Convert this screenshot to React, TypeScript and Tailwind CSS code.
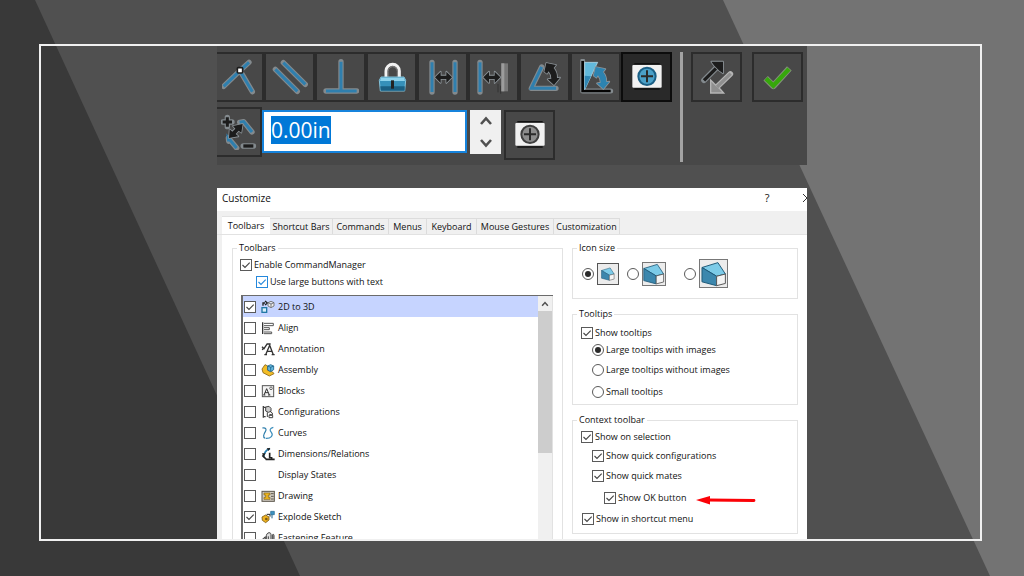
import { useEffect, useRef } from 'react';
import type { ReactNode } from 'react';
import { clsx } from 'clsx';

const BLUE = '#2f7fae';
const DARK = '#1c1c1c';

/* ── toolbar icons ─────────────────────────────────── */

function ToolIcon({ children }: { children: ReactNode }) {
  return (
    <svg viewBox="0 0 108 108" className="h-9 w-9 shrink-0" fill="none" aria-hidden="true">
      {children}
    </svg>
  );
}

// a stroke with the pale halo that every toolbar glyph has
function Line({ d, color = BLUE, width = 9 }: { d: string; color?: string; width?: number }) {
  return (
    <>
      <path d={d} stroke="#838a8e" strokeWidth={width + 7} strokeLinejoin="round" strokeLinecap="round" />
      <path d={d} stroke={color} strokeWidth={width} />
    </>
  );
}

function Shape({ d, color = DARK }: { d: string; color?: string }) {
  return <path d={d} fill={color} stroke="#8d9499" strokeWidth="5" strokeLinejoin="round" paintOrder="stroke" />;
}

function CoincidentIcon() {
  return (
    <ToolIcon>
      <Line d="M5 82 L54 35 L81 10 M54 35 L91 98" />
      <rect x="46" y="26" width="16" height="16" rx="3" fill="#fff" stroke={DARK} strokeWidth="5" />
    </ToolIcon>
  );
}

function ParallelIcon() {
  return (
    <ToolIcon>
      <Line d="M10 31 L76 97 M34 11 L100 76" />
    </ToolIcon>
  );
}

function PerpendicularIcon() {
  return (
    <ToolIcon>
      <Line d="M54 8 V95 M9 96 H101" />
    </ToolIcon>
  );
}

function LockIcon() {
  return (
    <ToolIcon>
      <path d="M36 58 V36 a20 20 0 0 1 40 0 V58" stroke="#f2f2f2" strokeWidth="9" />
      <path d="M42 56 V37 a14 14 0 0 1 28 0 V56" stroke="#8a8a8a" strokeWidth="3" />
      <path d="M21 54 H90 L95 64 L92 96 H19 L16 64 Z" fill="#3690b9" stroke="#86c3da" strokeWidth="3" />
      <path d="M21 56 H90 L93 66 H18 Z" fill="#8ed3ec" />
      <path d="M19 82 H92 V95 H20 Z" fill="#1b5f82" />
      <rect x="51" y="64" width="9" height="25" fill="#222" />
    </ToolIcon>
  );
}

const DOUBLE_ARROW = 'M30 55 L47 38 V50 H64 V38 L81 55 L64 72 V60 H47 V72 Z';

function DistanceIcon() {
  return (
    <ToolIcon>
      <Line d="M21 10 V99 M90 10 V99" />
      <Shape d={DOUBLE_ARROW} />
    </ToolIcon>
  );
}

function DistanceLimitIcon() {
  return (
    <ToolIcon>
      <Line d="M12 10 V99" />
      <path d="M66 75 V100 M74 80 V104" stroke="#333" strokeWidth="3" />
      <rect x="76" y="13" width="20" height="84" fill="#777" />
      <rect x="76" y="13" width="9" height="84" fill="#9c9c9c" />
      <g transform="translate(-8 0)">
        <Shape d={DOUBLE_ARROW} />
      </g>
    </ToolIcon>
  );
}

const CURVED_ARROW = 'M52 38 L58 12 L87 18 L80 27 Q91 40 90 57 L99 56 L81 78 L62 61 L73 59 Q73 47 65 37 L60 44 Z';

function AngleIcon() {
  return (
    <ToolIcon>
      <Line d="M44 24 L13 88 H87" />
      <Shape d={CURVED_ARROW} />
    </ToolIcon>
  );
}

function AngleLimitIcon() {
  return (
    <ToolIcon>
      <Line d="M14 6 V96 H98" color="#050505" width={8} />
      <path d="M20 10 H59 L20 92 Z" fill="#62b9dc" stroke="#c4e4f0" strokeWidth="2" />
      <path d="M20 50 L39 52 L20 92 Z" fill="#2f86b3" />
      <g transform="translate(-5 12)">
        <Shape d={CURVED_ARROW} color="#2d83b0" />
      </g>
    </ToolIcon>
  );
}

function TargetIcon({ muted = false }: { muted?: boolean }) {
  return (
    <ToolIcon>
      <path d="M16 14 H92 M16 90 H92" stroke="#111" strokeWidth="4" />
      <rect x="10" y="18" width="88" height="68" rx="3" fill="#f1f1f1" />
      <circle cx="54" cy="52" r="26" fill={muted ? '#8d8d8d' : '#4ba0c8'} stroke={muted ? '#3f3f3f' : '#1b5f85'} strokeWidth="6" />
      <path d="M54 34 V70 M36 52 H72" stroke="#2a2a2a" strokeWidth="6" />
    </ToolIcon>
  );
}

function FlipIcon() {
  return (
    <ToolIcon>
      <Line d="M15 64 L54 25" color={DARK} width={10} />
      <Shape d="M37 8 H72 V43 L61 35 L46 20 Z" />
      <path d="M94 45 L56 82" stroke="#b5b5b5" strokeWidth="17" strokeLinecap="round" />
      <path d="M35 63 V102 H74 L64 91 L46 74 Z" fill="#8f8f8f" stroke="#b5b5b5" strokeWidth="4" />
      <path d="M95 44 L54 84" stroke="#8f8f8f" strokeWidth="10" />
    </ToolIcon>
  );
}

function CheckMarkIcon() {
  return (
    <ToolIcon>
      <path d="M17 58 L40 81 L88 28" stroke="#829079" strokeWidth="19" strokeLinejoin="round" />
      <path d="M18 59 L40 80 L87 30" stroke="#36a80b" strokeWidth="13" />
    </ToolIcon>
  );
}

function DimensionIcon() {
  return (
    <ToolIcon>
      <Line d="M56 25 L68 23 L93 54" />
      <Line d="M23 82 L22 72 L47 102" />
      <Shape d="M24 72 L26 46 L34 53 L43 44 L36 36 L65 30 L61 56 L53 50 L44 60 L52 67 Z" />
      <Line d="M19 10 V38 M5 24 H33" color={DARK} width={9} />
      <Line d="M67 96 H97" color={DARK} width={10} />
    </ToolIcon>
  );
}

/* ── dialog icons ──────────────────────────────────── */

function RowIcon({ children }: { children?: ReactNode }) {
  return (
    <svg viewBox="0 0 42 42" className="h-3.5 w-3.5 shrink-0" fill="none" aria-hidden="true">
      {children}
    </svg>
  );
}

const toolbarRows: { name: string; checked?: boolean; selected?: boolean; icon?: ReactNode }[] = [
  {
    name: '2D to 3D',
    checked: true,
    selected: true,
    icon: (
      <>
        <rect x="3" y="23" width="14" height="14" fill="#d9effa" stroke="#2278a6" strokeWidth="4" />
        <path d="M6 17 V9 H12 M12 3 L19 9 L12 15" stroke="#222" strokeWidth="4" />
        <path d="M21 8 L30 4 L39 8 V18 L30 23 L21 18 Z M21 8 L30 12 L39 8 M30 12 V22" fill="#eee" stroke="#666" strokeWidth="2.5" />
      </>
    ),
  },
  {
    name: 'Align',
    icon: (
      <>
        <path d="M5 4 V39" stroke="#333" strokeWidth="4" />
        <path d="M9 7 H37 V14 H9 M9 20 H25 V26 H9 M9 33 H32 V38 H9" stroke="#555" strokeWidth="3" />
      </>
    ),
  },
  {
    name: 'Annotation',
    icon: (
      <>
        <path d="M14 38 L26 10 L37 38 M18 28 H33 M10 38 H18 M32 38 H41" stroke="#333" strokeWidth="4" />
        <path d="M3 14 L9 20 L19 5 M4 24 L8 16 M17 6 H29" stroke="#333" strokeWidth="4" />
      </>
    ),
  },
  {
    name: 'Assembly',
    icon: (
      <>
        <path d="M3 18 L12 5 L20 9 V22 L35 27 L39 32 L25 39 L6 29 Z" fill="#f2bd27" stroke="#8a6414" strokeWidth="2.5" />
        <path d="M20 9 L29 5 L38 9 V20 L29 26 L20 21 Z" fill="#65b8dd" stroke="#1f638a" strokeWidth="2.5" />
        <path d="M20 9 L29 13 L38 9 M29 13 V25" stroke="#1f638a" strokeWidth="2.5" />
      </>
    ),
  },
  {
    name: 'Blocks',
    icon: (
      <>
        <rect x="4" y="5" width="34" height="33" fill="#f3f3f3" stroke="#555" strokeWidth="3" />
        <path d="M9 33 L17 14 L25 33 M12 26 H22 M7 33 H13 M21 33 H28" stroke="#333" strokeWidth="3" />
        <circle cx="30" cy="13" r="4" stroke="#555" strokeWidth="2.5" />
      </>
    ),
  },
  {
    name: 'Configurations',
    icon: (
      <>
        <path d="M7 3 V38 M7 7 H15 M7 35 H14" stroke="#444" strokeWidth="4" />
        <path d="M14 6 L24 4 L30 10 V19 L22 22 L14 18 Z" fill="#ccc" stroke="#444" strokeWidth="3" />
        <path d="M19 22 V36 M28 20 L34 24 V30 L25 28 M24 31 H35 V38 H24 Z" stroke="#444" strokeWidth="3" />
      </>
    ),
  },
  {
    name: 'Curves',
    icon: (
      <>
        <path d="M4 6 C14 4 18 9 13 17 C8 25 5 33 12 37" stroke="#2d7dab" strokeWidth="3.5" />
        <path d="M37 4 C26 7 25 12 31 19 C38 28 30 38 14 37" stroke="#3b8ebc" strokeWidth="3.5" />
      </>
    ),
  },
  {
    name: 'Dimensions/Relations',
    icon: (
      <>
        <path d="M27 5 C13 9 9 18 8 31" stroke="#2a7fae" strokeWidth="5" />
        <path d="M17 4 L28 3 L23 12 Z M3 19 H14 L8 29 Z" fill="#222" />
        <path d="M4 25 L15 36 M26 17 V34 M14 37 H41 M26 28 L34 34" stroke="#222" strokeWidth="5" />
      </>
    ),
  },
  { name: 'Display States' },
  {
    name: 'Drawing',
    icon: (
      <>
        <rect x="3" y="7" width="37" height="30" fill="#cfcac0" stroke="#5c574c" strokeWidth="3" />
        <path d="M9 12 H27 V18 H22 V25 H27 V31 H9 V25 H14 V18 H9 Z" fill="#f0b71e" stroke="#806018" strokeWidth="2" />
        <path d="M30 14 H38 M30 22 H38 M30 30 H38" stroke="#5c574c" strokeWidth="3" />
      </>
    ),
  },
  {
    name: 'Explode Sketch',
    checked: true,
    icon: (
      <>
        <path d="M3 21 L14 15 L24 21 V30 L14 38 L4 31 Z" fill="#efb21f" stroke="#7a5a14" strokeWidth="2.5" />
        <circle cx="16" cy="27" r="4" fill="#7a5a14" />
        <path d="M17 13 H27 V20" stroke="#222" strokeWidth="3" />
        <path d="M29 4 H40 V14 H29 Z" fill="#3c93c2" stroke="#1f638a" strokeWidth="2" />
        <path d="M33 14 V25" stroke="#1f638a" strokeWidth="3" />
      </>
    ),
  },
  {
    name: 'Fastening Feature',
    icon: (
      <>
        <path d="M3 36 V26 L13 17 V36 Z" fill="#999" stroke="#444" strokeWidth="3" />
        <path d="M16 38 V14 C17 4 29 2 30 10 V38 Z" fill="#ddd" stroke="#444" strokeWidth="3" />
        <path d="M22 34 V16 M34 38 V12 C36 8 39 10 39 14 V38 Z" fill="#aaa" stroke="#444" strokeWidth="3" />
      </>
    ),
  },
];

function CubeIcon({ className }: { className: string }) {
  return (
    <svg viewBox="0 0 80 80" className={className} fill="none" aria-hidden="true">
      <path d="M3 20 L52 5 L75 40 L48 47 Z" fill="#7ccbe8" stroke="#1d5877" strokeWidth="3" />
      <path d="M3 20 L48 47 V76 L3 64 Z" fill="#3c87ad" stroke="#1d5877" strokeWidth="3" />
      <path d="M48 47 L75 40 V69 L48 76 Z" fill="#f4f4f4" stroke="#555" strokeWidth="3" />
    </svg>
  );
}

/* ── form controls ─────────────────────────────────── */

function Checkbox({ id, checked = false, accent = false }: { id: string; checked?: boolean; accent?: boolean }) {
  return (
    <span className="relative h-3 w-3 shrink-0">
      <input
        id={id}
        type="checkbox"
        defaultChecked={checked}
        className={clsx(
          'peer block h-3 w-3 appearance-none border bg-white',
          accent ? 'border-[#2488dc]' : 'border-[#5a5a5a]',
        )}
      />
      <svg
        viewBox="0 0 12 12"
        className={clsx(
          'pointer-events-none absolute inset-0 hidden peer-checked:block',
          accent ? 'text-[#2488dc]' : 'text-[#444]',
        )}
        fill="none"
        aria-hidden="true"
      >
        <path d="M2.5 6 L5 8.5 L9.7 3.6" stroke="currentColor" strokeWidth="1.1" />
      </svg>
    </span>
  );
}

function Radio({ id, name, checked = false }: { id: string; name: string; checked?: boolean }) {
  return (
    <input
      id={id}
      type="radio"
      name={name}
      defaultChecked={checked}
      aria-label={name === 'icon-size' ? id : undefined}
      className="h-3 w-3 shrink-0 appearance-none rounded-full border border-[#5a5a5a] bg-white bg-clip-content p-0.5 checked:bg-[#2b2b2b]"
    />
  );
}

function Option({ className, control, id, children }: { className: string; control: ReactNode; id: string; children: ReactNode }) {
  return (
    <div className={clsx('flex items-center gap-0.5', className)}>
      {control}
      <label htmlFor={id} className="whitespace-nowrap">
        {children}
      </label>
    </div>
  );
}

function Group({ title, className, children }: { title: string; className?: string; children: ReactNode }) {
  return (
    <fieldset className={clsx('min-w-0 border border-[#e2e2e2]', className)}>
      <legend className="ml-1 px-0.5 leading-[14px]">{title}</legend>
      {children}
    </fieldset>
  );
}

function ToolButton({
  label,
  className = 'w-[51px]',
  active = false,
  children,
}: {
  label: string;
  className?: string;
  active?: boolean;
  children: ReactNode;
}) {
  return (
    <button
      type="button"
      aria-label={label}
      aria-pressed={active}
      className={clsx(
        'flex h-[50px] shrink-0 items-center justify-center border-2',
        active ? 'border-[#0c0c0c] bg-[#292929]' : 'border-[#2c2c2c]',
        className,
      )}
    >
      {children}
    </button>
  );
}

function Chevron({ down = false, className }: { down?: boolean; className: string }) {
  return (
    <svg viewBox="0 0 14 10" className={className} fill="none" aria-hidden="true">
      <path d={down ? 'M2 2 L7 7.5 L12 2' : 'M2 8 L7 2.5 L12 8'} stroke="#505050" strokeWidth="2.6" />
    </svg>
  );
}

/* ── panels ────────────────────────────────────────── */

function MateToolbar() {
  const valueRef = useRef<HTMLInputElement>(null);

  useEffect(() => {
    valueRef.current?.focus();
    valueRef.current?.select();
  }, []);

  return (
    <section aria-label="Mate toolbar" className="flex h-[119px] shrink-0 overflow-hidden bg-[#484848] pt-1.5">
      <div className="flex flex-col gap-[5px]">
        <div className="flex">
          <ToolButton label="Coincident" className="w-[47px] border-l-0"><CoincidentIcon /></ToolButton>
          <ToolButton label="Parallel"><ParallelIcon /></ToolButton>
          <ToolButton label="Perpendicular"><PerpendicularIcon /></ToolButton>
          <ToolButton label="Lock"><LockIcon /></ToolButton>
          <ToolButton label="Distance"><DistanceIcon /></ToolButton>
          <ToolButton label="Distance limit"><DistanceLimitIcon /></ToolButton>
          <ToolButton label="Angle"><AngleIcon /></ToolButton>
          <ToolButton label="Angle limit"><AngleLimitIcon /></ToolButton>
          <ToolButton label="Center" active><TargetIcon /></ToolButton>
        </div>
        <div className="flex">
          <ToolButton label="Dimension" className="w-[45px] border-l-0"><DimensionIcon /></ToolButton>
          <div className="flex items-start pt-[3px]">
            <input
              ref={valueRef}
              type="text"
              aria-label="Distance value"
              defaultValue="0.00in"
              className="h-[43px] w-[205px] border-2 border-[#1683dc] bg-white px-[7px] pb-1 text-[21px] text-black caret-transparent outline-none selection:bg-[#0078d7] selection:text-white"
            />
            <div className="ml-[3px] flex h-11 w-[31px] flex-col bg-[#f0f0f0]">
              <button type="button" aria-label="Increase" className="flex flex-1 items-center justify-center">
                <Chevron className="h-2.5 w-3.5" />
              </button>
              <button type="button" aria-label="Decrease" className="flex flex-1 items-center justify-center">
                <Chevron down className="h-2.5 w-3.5" />
              </button>
            </div>
            <div className="ml-[3px]">
              <ToolButton label="Center reference"><TargetIcon muted /></ToolButton>
            </div>
          </div>
        </div>
      </div>
      <div className="ml-2 h-[110px] w-[3px] shrink-0 bg-[#a3a3a3]" />
      <div className="ml-2 flex gap-2.5">
        <ToolButton label="Flip"><FlipIcon /></ToolButton>
        <ToolButton label="OK"><CheckMarkIcon /></ToolButton>
      </div>
    </section>
  );
}

const tabs = [
  { name: 'Shortcut Bars', width: 'w-[63px]' },
  { name: 'Commands', width: 'w-[56px]' },
  { name: 'Menus', width: 'w-[38px]' },
  { name: 'Keyboard', width: 'w-[50px]' },
  { name: 'Mouse Gestures', width: 'w-[77px]' },
  { name: 'Customization', width: 'w-[66px]' },
];

function ToolbarList() {
  return (
    <div className="mt-[5px] mr-[9px] ml-2 flex border-t border-l-2 border-[#6b6b6b]">
      <ul className="min-w-0 flex-1">
        {toolbarRows.map((row) => (
          <li
            key={row.name}
            className={clsx('flex h-[21px] items-center pl-px', row.selected && 'bg-[#c6d4ff]')}
          >
            <Checkbox id={row.name} checked={row.checked} />
            <label htmlFor={row.name} className="ml-[5px] flex items-center gap-[3px] whitespace-nowrap">
              <RowIcon>{row.icon}</RowIcon>
              {row.name}
            </label>
          </li>
        ))}
      </ul>
      <div className="flex w-[15px] shrink-0 flex-col border-r border-[#e2e2e2] bg-[#f0f0f0]">
        <button type="button" aria-label="Scroll up" className="flex h-[15px] items-center justify-center">
          <Chevron className="h-1.5 w-2" />
        </button>
        <div className="h-[142px] bg-[#cdcdcd]" />
      </div>
    </div>
  );
}

function CustomizeDialog() {
  return (
    <section
      aria-labelledby="dialog-title"
      className="flex min-h-0 flex-1 flex-col overflow-hidden bg-[#f0f0f0] text-[9px] text-[#111]"
    >
      <header className="flex h-[23px] shrink-0 items-start bg-white pl-[5px]">
        <h1 id="dialog-title" className="flex-1 text-[10px] leading-5">Customize</h1>
        <button type="button" aria-label="Help" className="w-5 text-[11px] leading-5">?</button>
        <button type="button" aria-label="Close" className="-mr-2.5 ml-5 flex h-5 w-5 items-center justify-center">
          <svg viewBox="0 0 10 10" className="h-2.5 w-2.5" aria-hidden="true">
            <path d="M1 1 L9 9 M9 1 L1 9" stroke="#333" />
          </svg>
        </button>
      </header>

      <nav className="flex h-[24px] shrink-0 items-end border-b border-[#e2e2e2] pl-[5px]" role="tablist">
        <button type="button" role="tab" aria-selected="true" className="h-[18px] w-12 border-t border-[#e2e2e2] bg-white">
          Toolbars
        </button>
        {tabs.map((tab) => (
          <button
            key={tab.name}
            type="button"
            role="tab"
            aria-selected="false"
            className={clsx('h-4 shrink-0 border-t border-r border-[#dcdcdc] whitespace-nowrap', tab.width)}
          >
            {tab.name}
          </button>
        ))}
      </nav>

      <div className="ml-[5px] flex flex-1 items-start gap-[9px] bg-white pt-[6px] pr-[9px] pl-2.5">
        <Group title="Toolbars" className="flex-1">
          <Option className="h-[19px] pl-[7px]" id="enable-cm" control={<Checkbox id="enable-cm" checked />}>
            Enable CommandManager
          </Option>
          <Option className="h-4 pl-[23px]" id="large-buttons" control={<Checkbox id="large-buttons" checked accent />}>
            Use large buttons with text
          </Option>
          <ToolbarList />
        </Group>

        <div className="flex w-[226px] shrink-0 flex-col gap-2">
          <Group title="Icon size">
            <div className="flex items-center pt-1 pb-2.5 pl-[9px]">
              <Radio id="Small icons" name="icon-size" checked />
              <span className="ml-[3px] flex h-[22px] w-[22px] items-center justify-center border border-[#555] bg-[#ececec]">
                <CubeIcon className="h-3.5 w-3.5" />
              </span>
              <span className="ml-2 flex items-center gap-[3px]">
                <Radio id="Medium icons" name="icon-size" />
                <span className="flex h-6 w-6 items-center justify-center border border-[#777] bg-[#ececec]">
                  <CubeIcon className="h-[22px] w-[22px]" />
                </span>
              </span>
              <span className="ml-[18px] flex items-center gap-[3px]">
                <Radio id="Large icons" name="icon-size" />
                <span className="flex h-[29px] w-[29px] items-center justify-center border border-[#777] bg-[#ececec]">
                  <CubeIcon className="h-[26px] w-[26px]" />
                </span>
              </span>
            </div>
          </Group>

          <Group title="Tooltips" className="pt-1 pb-px">
            <Option className="h-4 pl-2" id="show-tips" control={<Checkbox id="show-tips" checked />}>
              Show tooltips
            </Option>
            <Option className="h-[18px] pl-[19px]" id="tips-images" control={<Radio id="tips-images" name="tips" checked />}>
              Large tooltips with images
            </Option>
            <Option className="h-[22px] pl-[19px]" id="tips-plain" control={<Radio id="tips-plain" name="tips" />}>
              Large tooltips without images
            </Option>
            <Option className="h-[22px] pl-[19px]" id="tips-small" control={<Radio id="tips-small" name="tips" />}>
              Small tooltips
            </Option>
          </Group>

          <Group title="Context toolbar" className="pb-1">
            <Option className="h-[19px] pl-2" id="on-selection" control={<Checkbox id="on-selection" checked />}>
              Show on selection
            </Option>
            <Option className="h-[19px] pl-[19px]" id="quick-config" control={<Checkbox id="quick-config" checked />}>
              Show quick configurations
            </Option>
            <Option className="h-[22px] pl-[19px]" id="quick-mates" control={<Checkbox id="quick-mates" checked />}>
              Show quick mates
            </Option>
            <div className="flex h-[22px] items-center gap-2">
              <Option className="w-[115px] pl-[31px]" id="ok-button" control={<Checkbox id="ok-button" checked />}>
                Show OK button
              </Option>
              <svg viewBox="0 0 60 10" className="mt-1 h-2.5 w-[60px]" aria-hidden="true">
                <path d="M12 5 L58 5.5" stroke="#fb0207" strokeWidth="2.8" strokeLinecap="round" />
                <path d="M0 5 L14 1 V9.4 Z" fill="#fb0207" />
              </svg>
            </div>
            <Option className="h-5 pl-[9px]" id="shortcut-menu" control={<Checkbox id="shortcut-menu" checked />}>
              Show in shortcut menu
            </Option>
          </Group>
        </div>
      </div>
    </section>
  );
}

export default function App() {
  return (
    <main className="relative isolate flex h-screen bg-[#505050] pt-11 pr-[42px] pb-[35px] pl-[39px] font-['Open_Sans',sans-serif]">
      {/* slanted backdrop */}
      <svg
        viewBox="0 0 1024 576"
        preserveAspectRatio="none"
        className="absolute inset-0 -z-10 h-full w-full"
        aria-hidden="true"
      >
        <path d="M0 0 H35 L300 576 H0 Z" fill="#393939" />
        <path d="M723 0 H1024 V576 H990 Z" fill="#737373" />
      </svg>

      <div className="flex min-w-0 flex-1 flex-col gap-[23px] border-2 border-[#f0f0f0] pr-[173px] pl-44">
        <MateToolbar />
        <CustomizeDialog />
      </div>
    </main>
  );
}
